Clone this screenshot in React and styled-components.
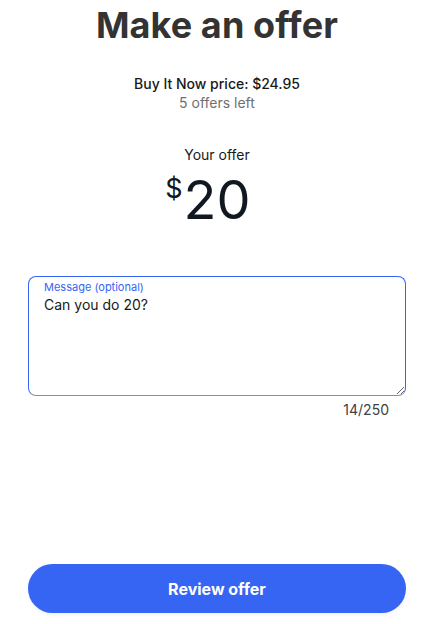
import styled, { createGlobalStyle } from "styled-components";

const GlobalStyle = createGlobalStyle`
    body {
        margin: 0;
        background: #fff;
        font-family: Inter, "Noto Sans", sans-serif;
    }
`

const Page = styled.main`
    width: 378px;
    height: 624px;
    margin: 0 auto 0 28px;
    display: flex;
    flex-direction: column;
    align-items: center;
    color: #191919;
`

const Title = styled.h1`
    margin: 0;
    padding-top: 3px;
    font-size: 36px;
    font-weight: 700;
    line-height: 44px;
    color: #333;
    letter-spacing: 0.1px;
`

const Price = styled.p`
    margin: 27px 0 0;
    font-size: 14px;
    font-weight: 500;
    line-height: 19px;
    color: #191919;
`

const Note = styled.p`
    margin: 0;
    font-size: 14px;
    line-height: 19px;
    color: #707070;
`

const OfferLabel = styled.p`
    margin: 33px 0 0;
    font-size: 14px;
    line-height: 19px;
    color: #191919;
`

const Amount = styled.div`
    position: relative;
    color: #111820;
    font-size: 54px;
    line-height: 56px;
    margin-top: 8px;
`

const Currency = styled.span`
    position: absolute;
    right: 100%;
    top: 2px;
    margin-right: 1px;
    font-size: 27px;
    line-height: 30px;
`

const Field = styled.label`
    position: relative;
    display: block;
    width: 100%;
    margin-top: 48px;
`

const FieldLabel = styled.span`
    position: absolute;
    top: 4px;
    left: 16px;
    font-size: 11px;
    color: #3665f3;
`

const Textarea = styled.textarea`
    display: block;
    box-sizing: border-box;
    width: 100%;
    height: 120px;
    padding: 18px 15px 0;
    border: 1px solid #3665f3;
    border-bottom-color: #8f8f8f;
    border-radius: 8px;
    font-family: Inter, "Noto Sans", sans-serif;
    font-size: 14px;
    line-height: 20px;
    color: #191919;
    outline: none;
    resize: vertical;
`

const Counter = styled.div`
    align-self: flex-end;
    margin-right: 17px;
    margin-top: 5px;
    font-size: 14px;
    color: #414141;
`

const Button = styled.button`
    margin-top: auto;
    margin-bottom: 11px;
    width: 100%;
    height: 49px;
    border: none;
    border-radius: 25px;
    background: #3665f3;
    color: #fff;
    font-family: Inter, "Noto Sans", sans-serif;
    font-size: 16px;
    font-weight: 700;
    box-shadow: 0 2px 4px rgba(0, 0, 0, 0.06);
`

export default function App() {
    const message = "Can you do 20?"

    return (
        <>
            <GlobalStyle />
            <Page>
                <Title>Make an offer</Title>
                <Price>Buy It Now price: $24.95</Price>
                <Note>5 offers left</Note>
                <OfferLabel>Your offer</OfferLabel>
                <Amount>
                    <Currency>$</Currency>20
                </Amount>
                <Field>
                    <FieldLabel>Message (optional)</FieldLabel>
                    <Textarea defaultValue={message} maxLength={250} />
                </Field>
                <Counter>{message.length}/250</Counter>
                <Button>Review offer</Button>
            </Page>
        </>
    );
}
